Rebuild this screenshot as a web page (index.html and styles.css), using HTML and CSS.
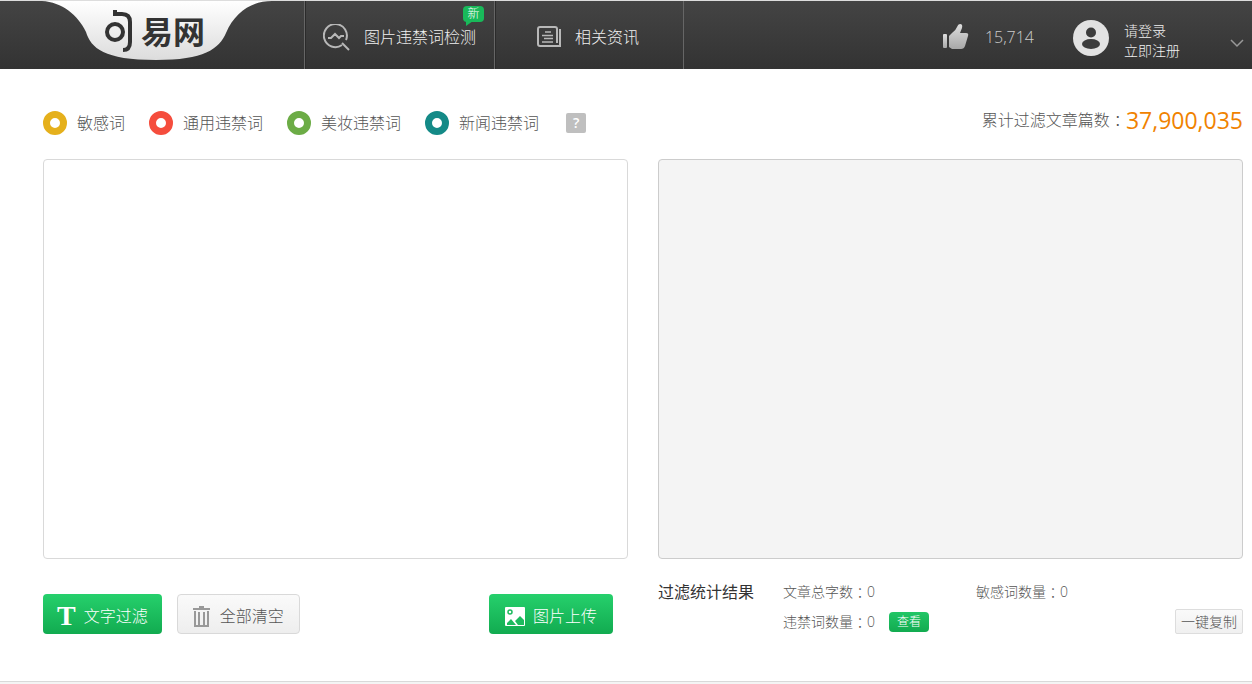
FILE: index.html
```html
<!DOCTYPE html>
<html lang="zh-CN">
<head>
    <meta charset="UTF-8">
    <meta name="viewport" content="width=device-width, initial-scale=1.0">
    <title>句易网</title>
    <link rel="stylesheet" href="styles.css">
</head>
<body>
    <header class="header">
        <a class="logo" href="#" aria-label="句易网">
            <svg width="236" height="62" viewBox="0 0 236 62">
                <defs>
                    <linearGradient id="logo-bg" x1="0" y1="0" x2="0" y2="1">
                        <stop offset="0" stop-color="#ffffff"/>
                        <stop offset="1" stop-color="#dcdcdc"/>
                    </linearGradient>
                </defs>
                <path d="M2 0C22 1 38 14 46 31C51 47 64 59 116 59C164 59 179 48 186 32C195 11 212 0 232 0Z" fill="url(#logo-bg)"/>
                <g fill="none" stroke="#333" stroke-width="4">
                    <circle cx="75" cy="31" r="8"/>
                    <path d="M75 9V13H82Q90 13 90 21V41Q90 49 83 49"/>
                </g>
                <text class="logo-text" x="101" y="43">易网</text>
            </svg>
        </a>
        <nav class="nav">
            <a class="nav-item" href="#">
                <svg width="27" height="27" viewBox="0 0 27 27" fill="none" stroke="#b8b8b8" stroke-width="2">
                    <path d="M19 21A11.500 11.500 0 1 1 23 16"/>
                    <path d="M19 19L26 26"/>
                    <path d="M5 14H8L12 10L16 14L18 12H21"/>
                </svg>
                <span>图片违禁词检测</span>
                <span class="badge">新</span>
            </a>
            <a class="nav-item" href="#">
                <svg width="24" height="22" viewBox="0 0 24 22" fill="none" stroke="#b8b8b8" stroke-width="2">
                    <path d="M20 17V3Q20 1 18 1H3Q1 1 1 3V18Q1 20 3 20H23V3"/>
                    <path d="M8 6H14M5 9.500H16M7 12.500H16M5 16H16" stroke-width="1.500"/>
                </svg>
                <span>相关资讯</span>
            </a>
        </nav>
        <button class="like" type="button" aria-label="点赞">
            <svg width="26" height="26" viewBox="0 0 26 26">
                <defs>
                    <linearGradient id="thumb" x1="0" y1="0" x2="0" y2="1">
                        <stop offset="0" stop-color="#dedede"/>
                        <stop offset="1" stop-color="#a8a8a8"/>
                    </linearGradient>
                </defs>
                <g fill="url(#thumb)">
                    <path d="M1 10H3Q4 10 4 11V23Q4 24 3 24H1Q0 24 0 23V11Q0 10 1 10Z"/>
                    <path d="M6 12L9 9Q13 6 14 3Q15 0 17 0Q20 0 19 4L17 9H23Q26 9 25 12L22 22Q21 25 18 25H9L6 23Z"/>
                </g>
            </svg>
            <span>15,714</span>
        </button>
        <div class="user">
            <svg width="36" height="36" viewBox="0 0 36 36">
                <circle cx="18" cy="18" r="18" fill="#e2e2e2"/>
                <circle cx="18" cy="12.500" r="5" fill="#3c3c3c"/>
                <ellipse cx="18" cy="24" rx="9" ry="5" fill="#3c3c3c"/>
            </svg>
            <div class="user-links">
                <a href="#">请登录</a>
                <a href="#">立即注册</a>
            </div>
            <button class="arrow" type="button" aria-label="展开">
                <svg width="14" height="9" viewBox="0 0 14 9" fill="none" stroke="#999" stroke-width="1.500">
                    <path d="M1 1L7 7L13 1"/>
                </svg>
            </button>
        </div>
    </header>

    <main class="main">
        <div class="toolbar">
            <label class="type"><input class="ring yellow" type="checkbox">敏感词</label>
            <label class="type"><input class="ring red" type="checkbox">通用违禁词</label>
            <label class="type"><input class="ring green" type="checkbox">美妆违禁词</label>
            <label class="type"><input class="ring teal" type="checkbox">新闻违禁词</label>
            <button class="help" type="button">?</button>
            <div class="total">累计过滤文章篇数<span class="colon" lang="zh-TW">：</span><span class="total-num">37,900,035</span></div>
        </div>

        <div class="columns">
            <section>
                <textarea class="box" aria-label="文章内容"></textarea>
                <div class="actions">
                    <button class="button primary" type="button">
                        <span class="letter">T</span>
                        文字过滤
                    </button>
                    <button class="button plain" type="button">
                        <svg width="17" height="21" viewBox="0 0 17 21" fill="none" stroke="#999" stroke-width="2">
                            <path d="M0 3H17M6 1H11M2 5V20H15V5M6 6V19M11 6V19"/>
                        </svg>
                        全部清空
                    </button>
                    <button class="button primary upload" type="button">
                        <svg width="20" height="19" viewBox="0 0 20 19">
                            <rect width="20" height="19" rx="1" fill="#fff"/>
                            <circle cx="5" cy="5" r="2" fill="none" stroke="#1dbb5e" stroke-width="1.500"/>
                            <path d="M2 18V16L6 12L11 18ZM10 14L15 9L19 13V18H13Z" fill="#1dbb5e"/>
                        </svg>
                        图片上传
                    </button>
                </div>
            </section>
            <section>
                <div class="box result"></div>
                <div class="stats">
                    <h2>过滤统计结果</h2>
                    <div class="stats-list">
                        <div class="stat">文章总字数<span class="colon" lang="zh-TW">：</span>0</div>
                        <div class="stat">敏感词数量<span class="colon" lang="zh-TW">：</span>0</div>
                        <div class="stat">违禁词数量<span class="colon" lang="zh-TW">：</span>0<button class="view" type="button">查看</button></div>
                    </div>
                    <button class="copy" type="button">一键复制</button>
                </div>
            </section>
        </div>
    </main>

    <footer class="footer"></footer>
</body>
</html>
```

FILE: styles.css
```css
* {
    box-sizing: border-box;
}
body {
    margin: 0;
    background-color: #ffffff;
    color: #555555;
    font-family: "Open Sans", "Noto Sans CJK SC", sans-serif;
    font-size: 16px;
    font-weight: 300;
    line-height: 24px;
}
a {
    color: inherit;
    text-decoration: none;
}
button {
    font: inherit;
    color: inherit;
    padding: 0;
    border: none;
    background: none;
    cursor: pointer;
}
svg {
    display: block;
    flex-shrink: 0;
}

/* header */
.header {
    display: flex;
    height: 69px;
    border-top: 1px solid #dddddd;
    background: linear-gradient(#444444, #333333);
    color: #f0f0f0;
}
.logo {
    width: 304px;
    padding-left: 40px;
}
.logo-text {
    font-family: "Noto Sans CJK SC", sans-serif;
    font-size: 32px;
    font-weight: 700;
    fill: #333333;
}
.nav {
    display: flex;
    border-left: 1px solid #666666;
}
.nav-item {
    position: relative;
    display: flex;
    align-items: center;
    gap: 14px;
    width: 190px;
    padding: 4px 0 0 17px;
    border-right: 1px solid #666666;
    border-left: 1px solid #2b2b2b;
}
.nav-item + .nav-item {
    width: 189px;
    padding-left: 41px;
}
.badge {
    position: absolute;
    top: 5px;
    right: 10px;
    width: 21px;
    height: 16px;
    border-radius: 4px;
    background-color: #19b95a;
    color: #ffffff;
    font-size: 12px;
    line-height: 16px;
    text-align: center;
}
.badge::after {
    content: "";
    position: absolute;
    left: 3px;
    top: 15px;
    border-top: 5px solid #19b95a;
    border-right: 7px solid transparent;
}
.like {
    display: flex;
    align-items: center;
    gap: 16px;
    margin-left: auto;
    padding-top: 4px;
    color: #cccccc;
}
.user {
    display: flex;
    align-items: center;
    margin-left: 39px;
    padding: 6px 8px 0 0;
}
.user-links {
    width: 106px;
    margin-left: 15px;
    padding-top: 5px;
    font-size: 14px;
    line-height: 20px;
}
.user-links a {
    display: block;
}
.arrow {
    padding-top: 10px;
}

/* content */
.main {
    padding: 36px 9px 47px 43px;
}
.toolbar {
    display: flex;
    align-items: center;
    height: 36px;
    margin-bottom: 18px;
}
.type {
    display: flex;
    align-items: center;
    gap: 10px;
    margin-right: 24px;
}
.ring {
    appearance: none;
    width: 24px;
    height: 24px;
    margin: 0;
    border: 7px solid;
    border-radius: 50%;
    cursor: pointer;
}
.ring.yellow {
    border-color: #e5b01c;
}
.ring.red {
    border-color: #f54d3d;
}
.ring.green {
    border-color: #6cac46;
}
.ring.teal {
    border-color: #148a87;
}
.help {
    width: 20px;
    height: 20px;
    margin-left: 3px;
    border-radius: 2px;
    background-color: #bfbfbf;
    color: #ffffff;
    font-size: 14px;
    font-weight: 600;
    line-height: 20px;
}
.total {
    display: flex;
    align-items: center;
    margin-left: auto;
    padding-bottom: 6px;
}
.total-num {
    color: #f08200;
    font-size: 23px;
    font-weight: 400;
}
.colon {
    font-family: "Noto Sans CJK TC", sans-serif;
}
.columns {
    display: grid;
    grid-template-columns: 1fr 1fr;
    gap: 30px;
}
.box {
    display: block;
    width: 100%;
    height: 400px;
    padding: 10px;
    border: 1px solid #d9d9d9;
    border-radius: 4px;
    font: inherit;
    resize: none;
}
.box.result {
    border-color: #cccccc;
    background-color: #f4f4f4;
    overflow-y: auto;
}
.actions {
    display: flex;
    gap: 15px;
    padding: 35px 15px 0 0;
}
.button {
    display: flex;
    align-items: center;
    justify-content: center;
    gap: 8px;
    height: 40px;
    padding: 4px 14px 0;
    border-radius: 4px;
}
.button.primary {
    background: linear-gradient(#26d06c, #12ab50);
    color: #ffffff;
}
.button.plain {
    gap: 10px;
    padding: 4px 15px 0;
    border: 1px solid #d9d9d9;
    background: linear-gradient(#fafafa, #eeeeee);
}
.button.upload {
    margin-left: auto;
    padding: 4px 16px 0;
}
.letter {
    font-family: "Liberation Serif", serif;
    font-size: 28px;
    font-weight: 700;
}
.stats {
    display: flex;
    padding-top: 21px;
}
.stats h2 {
    width: 125px;
    margin: 0;
    color: #333333;
    font-size: 16px;
    font-weight: 400;
}
.stats-list {
    display: grid;
    grid-template-columns: 193px 1fr;
    flex: 1;
    row-gap: 6px;
    font-size: 14px;
}
.stat {
    display: flex;
    align-items: center;
    height: 24px;
}
.view {
    width: 40px;
    height: 20px;
    margin-left: 14px;
    border-radius: 4px;
    background: linear-gradient(#22c666, #12ab50);
    color: #ffffff;
    font-size: 12px;
    line-height: 20px;
}
.copy {
    align-self: flex-end;
    width: 68px;
    height: 25px;
    border: 1px solid #dddddd;
    border-radius: 2px;
    background: linear-gradient(#fafafa, #f0f0f0);
    font-size: 14px;
    line-height: 22px;
}
.footer {
    height: 3px;
    border-top: 1px solid #d9d9d9;
    background-color: #f4f4f4;
}
```
